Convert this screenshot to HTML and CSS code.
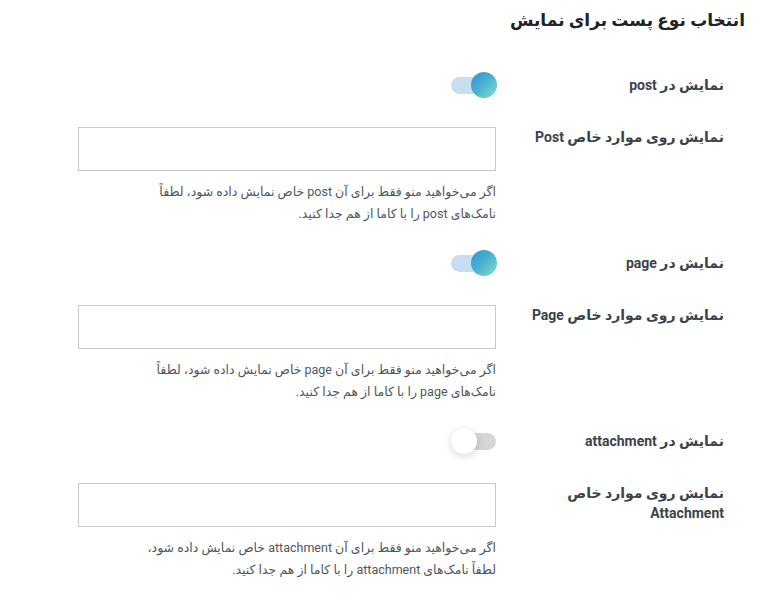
FILE: index.html
```html
<!DOCTYPE html>
<html lang="fa" dir="rtl">
<head>
<meta charset="utf-8">
<link rel="stylesheet" href="styles.css">
</head>
<body>
<div class="page">
  <h2 class="title">انتخاب نوع پست برای نمایش</h2>
  <div class="table">
    <div class="row row-toggle first">
      <div class="label">نمایش در post</div>
      <div class="field"><span class="toggle on"><span class="knob"></span></span></div>
    </div>
    <div class="row row-input">
      <div class="label">نمایش روی موارد خاص Post</div>
      <div class="field">
        <div class="input"></div>
        <p class="desc">اگر می‌خواهید منو فقط برای آن post خاص نمایش داده شود، لطفاً<br>نامک‌های post را با کاما از هم جدا کنید.</p>
      </div>
    </div>

    <div class="row row-toggle">
      <div class="label">نمایش در page</div>
      <div class="field"><span class="toggle on"><span class="knob"></span></span></div>
    </div>
    <div class="row row-input">
      <div class="label">نمایش روی موارد خاص Page</div>
      <div class="field">
        <div class="input"></div>
        <p class="desc">اگر می‌خواهید منو فقط برای آن page خاص نمایش داده شود، لطفاً<br>نامک‌های page را با کاما از هم جدا کنید.</p>
      </div>
    </div>

    <div class="row row-toggle">
      <div class="label">نمایش در attachment</div>
      <div class="field"><span class="toggle"><span class="knob"></span></span></div>
    </div>
    <div class="row row-input">
      <div class="label">نمایش روی موارد خاص Attachment</div>
      <div class="field">
        <div class="input"></div>
        <p class="desc">اگر می‌خواهید منو فقط برای آن attachment خاص نمایش داده شود،<br>لطفاً نامک‌های attachment را با کاما از هم جدا کنید.</p>
      </div>
    </div>
  </div>
</div>
</body>
</html>
```

FILE: styles.css
```css
* { box-sizing: border-box; }
html, body { margin: 0; padding: 0; background: #ffffff; }
body {
  font-family: "Roboto", "DejaVu Sans", sans-serif;
  color: #3c434a;
  direction: rtl;
}
.page {
  padding: 6px 19px 0 0;
}
.title {
  margin: 0;
  font-size: 17px;
  line-height: 28px;
  font-weight: 700;
  color: #1d2327;
}
.table {
  margin-right: 21px;
}
.row {
  display: flex;
  flex-direction: row;
}
.label {
  width: 228px;
  flex: none;
  padding-left: 30px;
  font-size: 14px;
  font-weight: 700;
  line-height: 20px;
  color: #3c434a;
}
.field {
  width: 418px;
  flex: none;
}
.row-toggle {
  margin-top: 24px;
  height: 28px;
  align-items: center;
}
.row-toggle.first { margin-top: 37px; }
.row-input { margin-top: 28px; }

.toggle {
  position: relative;
  display: block;
  width: 45px;
  height: 17px;
  border-radius: 9px;
  background: #d6d6d6;
}
.toggle .knob {
  position: absolute;
  top: -5px;
  right: 19px;
  width: 26px;
  height: 26px;
  border-radius: 50%;
  background: #ffffff;
  box-shadow: 0 2px 8px rgba(0,0,0,0.16);
}
.toggle.on {
  background: #c6def2;
}
.toggle.on .knob {
  right: -1px;
  background: linear-gradient(135deg, #2f95d4 0%, #4bb3cf 50%, #8adfc6 100%);
  box-shadow: none;
}
.input {
  width: 418px;
  height: 44px;
  border: 1px solid #c8c8c8;
  background: #fff;
}
.desc {
  margin: 10px 0 0;
  font-size: 12.5px;
  line-height: 22px;
  color: #50575e;
  white-space: nowrap;
}
```
